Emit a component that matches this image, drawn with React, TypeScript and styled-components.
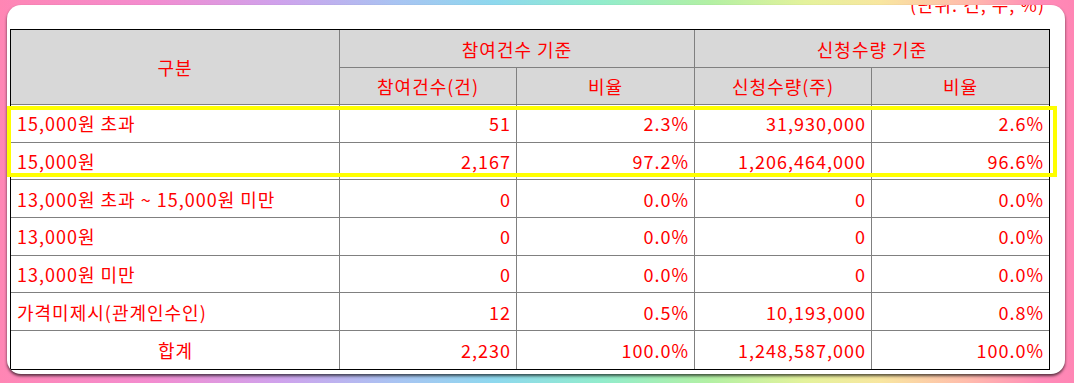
import React from "react";
import styled, { createGlobalStyle } from "styled-components";

const GlobalStyle = createGlobalStyle`
  html, body {
    margin: 0;
    padding: 0;
  }
  body {
    width: 1074px;
    height: 383px;
    overflow: hidden;
    font-family: "Noto Sans CJK KR", "Noto Sans", sans-serif;
  }
`;

const Page = styled.div`
  width: 1074px;
  height: 383px;
  box-sizing: border-box;
  padding: 5px 9px 9px 7px;
  background: linear-gradient(
    90deg,
    #ff86b4 0%,
    #f38ccf 14%,
    #cfa2ec 26%,
    #a8c4f2 37%,
    #8ed8ee 46%,
    #92eccc 56%,
    #b2f0a4 66%,
    #e4f29c 75%,
    #f8e6a0 82%,
    #ffbcac 90%,
    #ff8ab8 97%,
    #ff86b4 100%
  );
`;

const Card = styled.div`
  height: 369px;
  box-sizing: border-box;
  background: #fff;
  border-radius: 14px;
  box-shadow: 0 2px 3px rgba(0, 0, 0, 0.65);
  overflow: hidden;
  padding: 0 0 0 3px;
`;

const Unit = styled.div`
  width: 1040px;
  height: 18px;
  margin-top: -10px;
  box-sizing: border-box;
  padding-right: 5px;
  text-align: right;
  color: #ff0000;
  font-size: 18px;
  line-height: 18px;
  letter-spacing: 1px;
`;

const TableWrap = styled.div`
  position: relative;
  margin-top: 16px;
  width: 1040px;
`;

const Table = styled.table`
  width: 1040px;
  table-layout: fixed;
  border-collapse: separate;
  border-spacing: 0;
  border: 1px solid #000;
  color: #ff0000;
  font-size: 18px;
  letter-spacing: 1px;
`;

const HeadCell = styled.th<{ $h: number; $last?: boolean }>`
  height: ${(p) => p.$h}px;
  box-sizing: border-box;
  padding: 0;
  background: #d8d8d8;
  font-weight: 400;
  text-align: center;
  vertical-align: middle;
  border-right: ${(p) => (p.$last ? "none" : "1px solid #808080")};
  border-bottom: 1px solid #808080;
`;

const Cell = styled.td<{ $align: "left" | "right" | "center"; $last?: boolean; $end?: boolean }>`
  height: 37.7px;
  box-sizing: border-box;
  padding: 0 5px 0 6px;
  text-align: ${(p) => p.$align};
  vertical-align: middle;
  white-space: nowrap;
  border-right: ${(p) => (p.$last ? "none" : "1px solid #808080")};
  border-bottom: ${(p) => (p.$end ? "none" : "1px solid #808080")};
`;

const Highlight = styled.div`
  position: absolute;
  left: -3px;
  top: 77px;
  width: 1050px;
  height: 71px;
  box-sizing: border-box;
  border: 4px solid #ffff00;
  pointer-events: none;
`;

type Row = [string, string, string, string, string];

const rows: Row[] = [
  ["15,000원 초과", "51", "2.3%", "31,930,000", "2.6%"],
  ["15,000원", "2,167", "97.2%", "1,206,464,000", "96.6%"],
  ["13,000원 초과 ~ 15,000원 미만", "0", "0.0%", "0", "0.0%"],
  ["13,000원", "0", "0.0%", "0", "0.0%"],
  ["13,000원 미만", "0", "0.0%", "0", "0.0%"],
  ["가격미제시(관계인수인)", "12", "0.5%", "10,193,000", "0.8%"],
  ["합계", "2,230", "100.0%", "1,248,587,000", "100.0%"],
];

const App: React.FC = () => {
  return (
    <>
      <GlobalStyle />
      <Page>
        <Card>
          <Unit>(단위: 건, 주, %)</Unit>
          <TableWrap>
            <Table>
              <colgroup>
                <col style={{ width: 329 }} />
                <col style={{ width: 177 }} />
                <col style={{ width: 178 }} />
                <col style={{ width: 177 }} />
                <col style={{ width: 177 }} />
              </colgroup>
              <thead>
                <tr>
                  <HeadCell $h={75} rowSpan={2}>
                    구분
                  </HeadCell>
                  <HeadCell $h={38} colSpan={2}>
                    참여건수 기준
                  </HeadCell>
                  <HeadCell $h={38} colSpan={2} $last>
                    신청수량 기준
                  </HeadCell>
                </tr>
                <tr>
                  <HeadCell $h={37}>참여건수(건)</HeadCell>
                  <HeadCell $h={37}>비율</HeadCell>
                  <HeadCell $h={37}>신청수량(주)</HeadCell>
                  <HeadCell $h={37} $last>
                    비율
                  </HeadCell>
                </tr>
              </thead>
              <tbody>
                {rows.map((r, i) => {
                  const end = i === rows.length - 1;
                  return (
                    <tr key={i}>
                      <Cell $align={end ? "center" : "left"} $end={end}>
                        {r[0]}
                      </Cell>
                      <Cell $align="right" $end={end}>
                        {r[1]}
                      </Cell>
                      <Cell $align="right" $end={end}>
                        {r[2]}
                      </Cell>
                      <Cell $align="right" $end={end}>
                        {r[3]}
                      </Cell>
                      <Cell $align="right" $end={end} $last>
                        {r[4]}
                      </Cell>
                    </tr>
                  );
                })}
              </tbody>
            </Table>
            <Highlight />
          </TableWrap>
        </Card>
      </Page>
    </>
  );
};

export default App;
